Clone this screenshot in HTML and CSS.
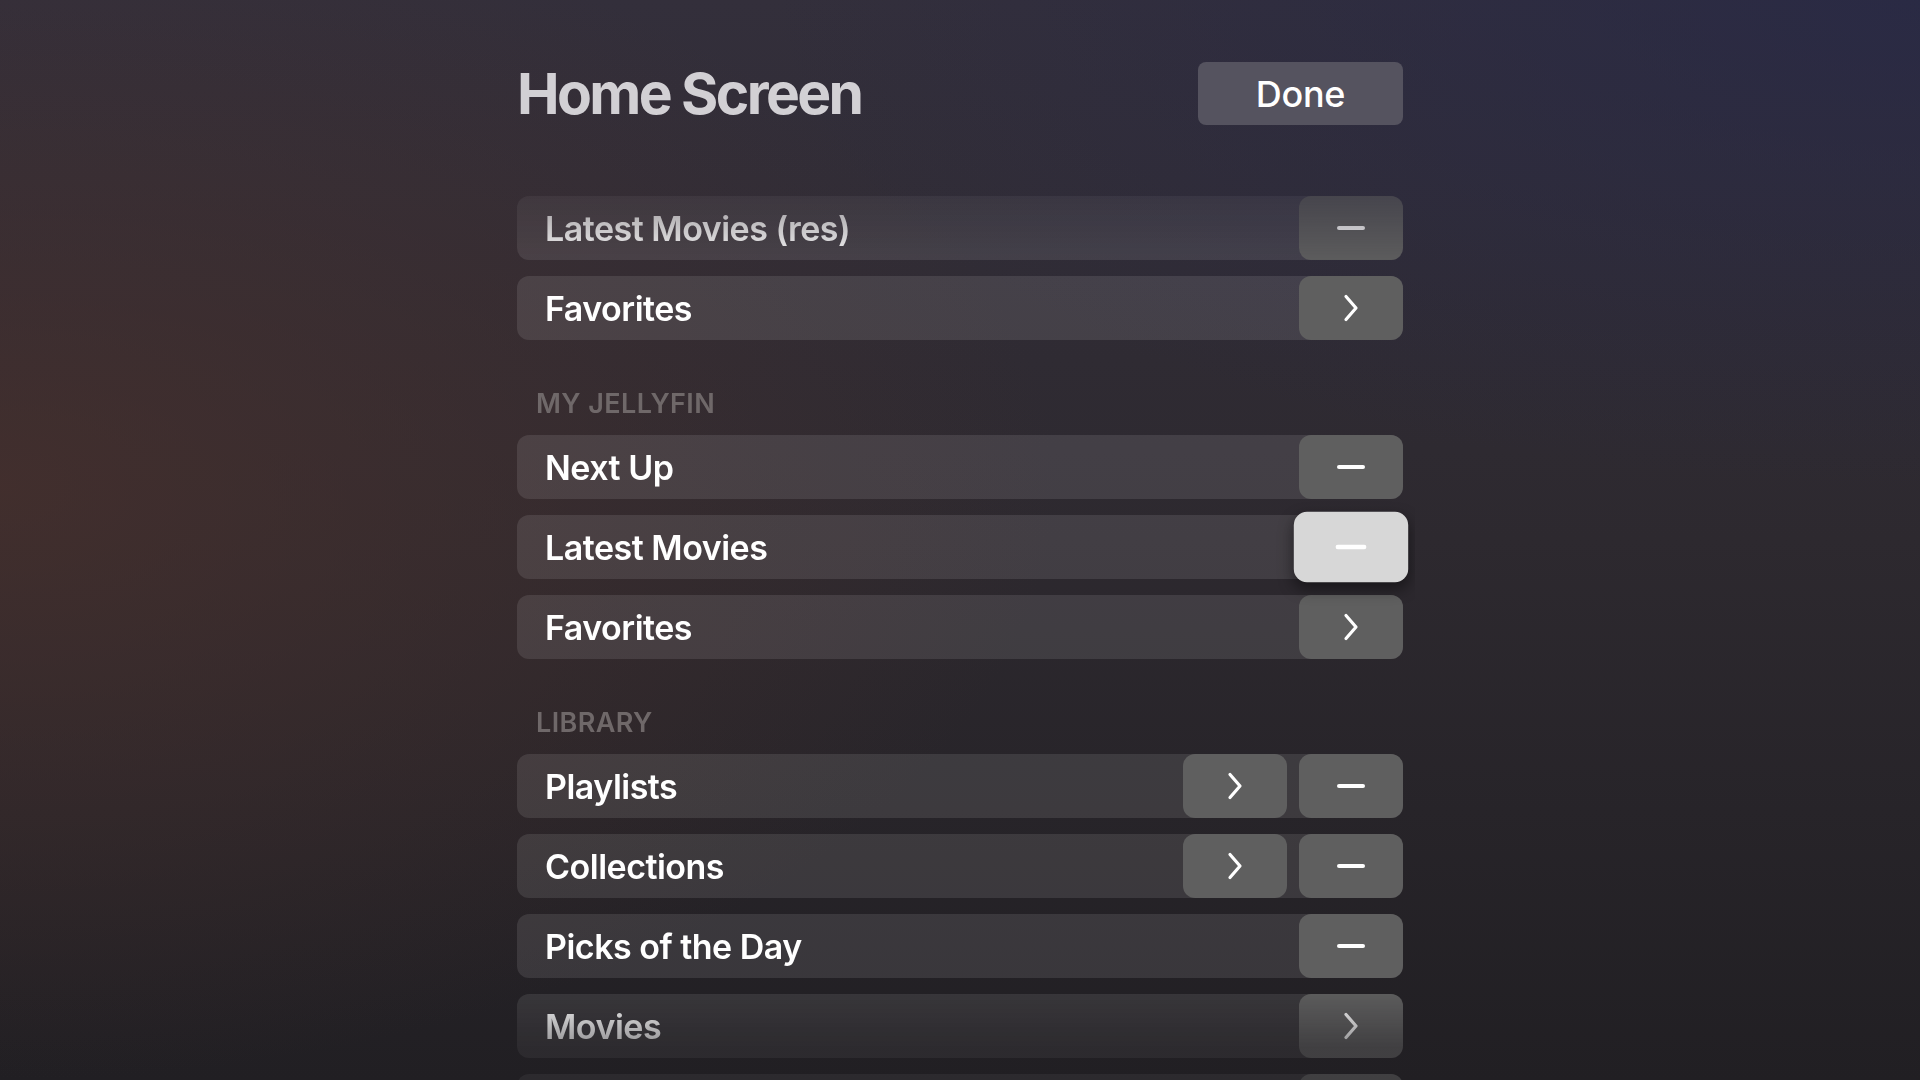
FILE: index.html
```html
<!DOCTYPE html>
<html lang="en">
<head>
<meta charset="utf-8">
<title>Home Screen</title>
<link rel="stylesheet" href="styles.css">
</head>
<body>
<main class="page">
  <header class="top">
    <h1 class="title">Home Screen</h1>
    <button class="done">Done</button>
  </header>

  <div class="list">
    <section class="section">
      <div class="row">
        <span class="label">Latest Movies (res)</span>
        <div class="actions"><span class="btn"><i class="minus"></i></span></div>
      </div>
      <div class="row">
        <span class="label">Favorites</span>
        <div class="actions"><span class="btn"><svg class="chev" viewBox="0 0 16 28"><path d="M3 2.5 L13 14 L3 25.5"/></svg></span></div>
      </div>
    </section>

    <section class="section">
      <h2 class="section-title">MY JELLYFIN</h2>
      <div class="row">
        <span class="label">Next Up</span>
        <div class="actions"><span class="btn"><i class="minus"></i></span></div>
      </div>
      <div class="row">
        <span class="label">Latest Movies</span>
        <div class="actions"><span class="btn focused"><i class="minus"></i></span></div>
      </div>
      <div class="row">
        <span class="label">Favorites</span>
        <div class="actions"><span class="btn"><svg class="chev" viewBox="0 0 16 28"><path d="M3 2.5 L13 14 L3 25.5"/></svg></span></div>
      </div>
    </section>

    <section class="section">
      <h2 class="section-title">LIBRARY</h2>
      <div class="row">
        <span class="label">Playlists</span>
        <div class="actions">
          <span class="btn"><svg class="chev" viewBox="0 0 16 28"><path d="M3 2.5 L13 14 L3 25.5"/></svg></span>
          <span class="btn"><i class="minus"></i></span>
        </div>
      </div>
      <div class="row">
        <span class="label">Collections</span>
        <div class="actions">
          <span class="btn"><svg class="chev" viewBox="0 0 16 28"><path d="M3 2.5 L13 14 L3 25.5"/></svg></span>
          <span class="btn"><i class="minus"></i></span>
        </div>
      </div>
      <div class="row">
        <span class="label">Picks of the Day</span>
        <div class="actions"><span class="btn"><i class="minus"></i></span></div>
      </div>
      <div class="row">
        <span class="label">Movies</span>
        <div class="actions"><span class="btn"><svg class="chev" viewBox="0 0 16 28"><path d="M3 2.5 L13 14 L3 25.5"/></svg></span></div>
      </div>
      <div class="row">
        <span class="label"></span>
        <div class="actions"><span class="btn"></span></div>
      </div>
    </section>
  </div>
</main>
</body>
</html>
```

FILE: styles.css
```css
* { box-sizing: border-box; }

html, body {
  margin: 0;
  height: 1080px;
  overflow: hidden;
}

body {
  font-family: Inter, "Noto Sans", "Liberation Sans", sans-serif;
  color: #fff;
  background:
    radial-gradient(ellipse 55% 55% at 0% 45%, rgba(72, 48, 44, 0.75), rgba(72, 48, 44, 0) 100%),
    radial-gradient(ellipse 60% 45% at 100% 0%, rgba(38, 40, 72, 0.7), rgba(38, 40, 72, 0) 100%),
    linear-gradient(to bottom, #332f3b 0%, #2d292f 50%, #211f23 100%);
}

.page {
  width: 886px;
  margin: 0 auto;
  padding-top: 62px;
}

.top {
  display: flex;
  align-items: center;
  justify-content: space-between;
  height: 63px;
}

.title {
  margin: 0;
  font-size: 57px;
  font-weight: 700;
  letter-spacing: -2.6px;
  color: #d2d0d4;
  line-height: 63px;
}

.done {
  width: 205px;
  height: 63px;
  border: 0;
  border-radius: 8px;
  background: #55535f;
  color: #fff;
  font-family: inherit;
  font-size: 36px;
  font-weight: 500;
  letter-spacing: -0.3px;
  padding: 0;
}

.list {
  margin: 71px -12px 0;
  padding: 0 12px;
  display: flex;
  flex-direction: column;
  gap: 47px;
  -webkit-mask-image: linear-gradient(to bottom, rgba(0,0,0,0.5) 0px, #000 72px, #000 calc(100% - 150px), rgba(0,0,0,0.5) calc(100% - 90px), rgba(0,0,0,0.5) 100%);
  mask-image: linear-gradient(to bottom, rgba(0,0,0,0.5) 0px, #000 72px, #000 calc(100% - 150px), rgba(0,0,0,0.5) calc(100% - 90px), rgba(0,0,0,0.5) 100%);
}

.section {
  display: flex;
  flex-direction: column;
  gap: 16px;
}

.section-title {
  margin: 0;
  padding-left: 19px;
  height: 32px;
  line-height: 34px;
  font-size: 27px;
  font-weight: 600;
  color: #6f6869;
  letter-spacing: 0.4px;
}

.row {
  height: 64px;
  flex: 0 0 64px;
  display: flex;
  align-items: center;
  justify-content: space-between;
  border-radius: 12px;
  background: rgba(255, 255, 255, 0.1);
  padding-left: 28px;
}

.label {
  font-size: 34px;
  font-weight: 600;
  letter-spacing: -0.5px;
  color: #fff;
}

.actions {
  display: flex;
  gap: 12px;
  height: 100%;
}

.btn {
  width: 104px;
  height: 64px;
  border-radius: 12px;
  background: #5f5f5f;
  display: flex;
  align-items: center;
  justify-content: center;
}

.btn.focused {
  background: #d7d7d7;
  transform: scale(1.1);
  box-shadow: 0 6px 14px rgba(0, 0, 0, 0.45);
}

.minus {
  display: block;
  width: 28px;
  height: 4px;
  border-radius: 2px;
  background: #fff;
}

.chev {
  width: 16px;
  height: 28px;
  fill: none;
  stroke: #fff;
  stroke-width: 3.2;
  stroke-linecap: round;
  stroke-linejoin: round;
}
```
